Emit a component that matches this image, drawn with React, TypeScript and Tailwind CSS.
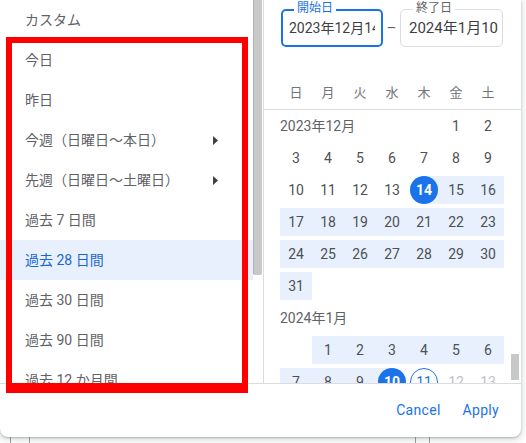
import React from 'react';

type Kind = 'plain' | 'range' | 'start' | 'end' | 'today' | 'disabled' | 'empty';
type Cell = { n?: number; k: Kind };

const bandClass: Record<Kind, string> = {
  plain: '',
  range: 'bg-[#e8f0fe]',
  start: 'bg-[linear-gradient(to_right,transparent_50%,#e8f0fe_50%)]',
  end: 'bg-[linear-gradient(to_right,#e8f0fe_50%,transparent_50%)]',
  today: '',
  disabled: '',
  empty: '',
};

function DayCell({ c }: { c: Cell }) {
  let inner: React.ReactNode = null;
  if (c.k === 'start' || c.k === 'end') {
    inner = (
      <span className="w-[28px] h-[28px] rounded-full bg-[#1a73e8] text-white font-bold flex items-center justify-center">
        {c.n}
      </span>
    );
  } else if (c.k === 'today') {
    inner = (
      <span className="w-[28px] h-[28px] rounded-full border border-[#1a73e8] text-[#1a73e8] flex items-center justify-center">
        {c.n}
      </span>
    );
  } else if (c.k === 'disabled') {
    inner = <span className="text-[#bdc1c6]">{c.n}</span>;
  } else if (c.k !== 'empty') {
    inner = <span>{c.n}</span>;
  }
  return (
    <div className="h-[32px] py-[2px]">
      <div className={`h-[28px] flex items-center justify-center ${bandClass[c.k]}`}>{inner}</div>
    </div>
  );
}

const r = (from: number, to: number, k: Kind): Cell[] => {
  const out: Cell[] = [];
  for (let i = from; i <= to; i++) out.push({ n: i, k });
  return out;
};

const items = [
  { t: '今日' },
  { t: '昨日' },
  { t: '今週（日曜日〜本日）', arrow: true },
  { t: '先週（日曜日〜土曜日）', arrow: true },
  { t: '過去 7 日間' },
  { t: '過去 28 日間', sel: true },
  { t: '過去 30 日間' },
  { t: '過去 90 日間' },
  { t: '過去 12 か月間' },
];

export default function App() {
  const font = { fontFamily: 'Roboto, "Noto Sans CJK JP", sans-serif' };
  return (
    <div className="w-[526px] h-[443px] overflow-hidden bg-white relative" style={font}>
      <div className="w-[521px] h-[437px] flex flex-col bg-white rounded-b-lg shadow-[0_1px_2px_rgba(60,64,67,0.3),0_2px_6px_2px_rgba(60,64,67,0.15)] relative z-10">
        <div className="flex h-[383px]">
          {/* Left list */}
          <div className="w-[263px] flex">
            <div className="w-[253px] h-full overflow-hidden">
              <div className="h-[40px] pl-[25px] flex items-center text-[14px] text-[#5f6368]">カスタム</div>
              {items.map((it) => (
                <div
                  key={it.t}
                  className={`h-[40px] pl-[25px] pr-[35px] flex items-center justify-between text-[14px] whitespace-nowrap ${
                    it.sel ? 'bg-[#e8f0fe] text-[#1967d2]' : 'text-[#5f6368]'
                  }`}
                >
                  <span>{it.t}</span>
                  {it.arrow && (
                    <svg width="5" height="9" viewBox="0 0 5 9">
                      <path d="M0 0 L5 4.5 L0 9 Z" fill="#3c4043" />
                    </svg>
                  )}
                </div>
              ))}
            </div>
            <div className="w-[10px] h-full">
              <div className="w-[9px] h-[275px] bg-[#c8c8c8] border-l border-[#b4b4b4] rounded-b-[2px]" />
            </div>
          </div>

          {/* Calendar */}
          <div className="w-[258px] border-l border-[#dadce0] flex flex-col">
            <div className="border-b border-[#dadce0]">
              <div className="pt-[9px] pl-[17px] flex items-center">
                <div className="relative w-[102px] h-[38px] border-2 border-[#1a73e8] rounded-[5px]">
                  <span className="absolute -top-[10px] left-[11px] px-[3px] bg-white text-[12px] leading-[14px] text-[#1a73e8]">
                    開始日
                  </span>
                  <div className="h-full flex items-center pl-[6px] pr-[6px] overflow-hidden">
                    <span className="whitespace-nowrap overflow-hidden text-[14px] text-[#3c4043]">2023年12月14日</span>
                  </div>
                </div>
                <div className="w-[17px] text-center text-[15px] text-[#5f6368]">–</div>
                <div className="relative w-[103px] h-[38px] border border-[#dadce0] rounded-[5px]">
                  <span className="absolute -top-[9px] left-[12px] px-[3px] bg-white text-[12px] leading-[14px] text-[#5f6368]">
                    終了日
                  </span>
                  <div className="h-full flex items-center pl-[8px] pr-[2px] overflow-hidden">
                    <span className="whitespace-nowrap overflow-hidden text-[15px] text-[#3c4043]">2024年1月10日</span>
                  </div>
                </div>
              </div>
              <div className="mt-[30px] h-[32px] pl-[16px] grid grid-cols-[repeat(7,32px)] items-center text-[13px] text-[#70757a]">
                {['日', '月', '火', '水', '木', '金', '土'].map((d) => (
                  <div key={d} className="text-center">
                    {d}
                  </div>
                ))}
              </div>
            </div>
            <div className="h-[273px] overflow-hidden flex">
              <div className="pl-[16px] w-[240px]">
                <div className="grid grid-cols-[repeat(7,32px)] text-[14px] text-[#4d5156]">
                  <div className="col-span-5 h-[32px] flex items-center text-[#5f6368]">2023年12月</div>
                  {r(1, 2, 'plain').map((c, i) => <DayCell key={'a' + i} c={c} />)}
                  {r(3, 9, 'plain').map((c, i) => <DayCell key={'b' + i} c={c} />)}
                  {[...r(10, 13, 'plain'), { n: 14, k: 'start' as Kind }, ...r(15, 16, 'range')].map((c, i) => (
                    <DayCell key={'c' + i} c={c} />
                  ))}
                  {r(17, 23, 'range').map((c, i) => <DayCell key={'d' + i} c={c} />)}
                  {r(24, 30, 'range').map((c, i) => <DayCell key={'e' + i} c={c} />)}
                  {[{ n: 31, k: 'range' as Kind }, ...Array.from({ length: 6 }, () => ({ k: 'empty' as Kind }))].map((c, i) => (
                    <DayCell key={'f' + i} c={c} />
                  ))}
                  <div className="col-span-7 h-[32px] flex items-center text-[#5f6368]">2024年1月</div>
                  {[{ k: 'empty' as Kind }, ...r(1, 6, 'range')].map((c, i) => <DayCell key={'g' + i} c={c} />)}
                  {[
                    ...r(7, 9, 'range'),
                    { n: 10, k: 'end' as Kind },
                    { n: 11, k: 'today' as Kind },
                    ...r(12, 13, 'disabled'),
                  ].map((c, i) => (
                    <DayCell key={'h' + i} c={c} />
                  ))}
                </div>
              </div>
              <div className="ml-[7px] w-[8px]">
                <div className="mt-[244px] h-[26px] bg-[#c8c8c8]" />
              </div>
            </div>
          </div>
        </div>

        {/* Footer */}
        <div className="h-[54px] border-t border-[#dadce0] flex items-center justify-end pr-[14px] gap-[6px]">
          <button className="h-[36px] px-[8px] text-[14px] font-normal text-[#1a73e8] tracking-[0.3px]">Cancel</button>
          <button className="h-[36px] px-[8px] text-[14px] font-normal text-[#1a73e8] tracking-[0.3px]">Apply</button>
        </div>
      </div>

      <div className="flex h-[6px]">
        <div className="ml-[10px] w-[20px] h-full border-x border-[#9e9e9e]" />
        <div className="ml-[385px] w-[15px] h-full border-x border-[#9e9e9e]" />
      </div>

      {/* red annotation box */}
      <div className="absolute left-[6px] top-[37px] w-[242px] h-[356px] border-t-[6px] border-x-[6px] border-b-[10px] border-[#ff0000] z-20 pointer-events-none" />
    </div>
  );
}
